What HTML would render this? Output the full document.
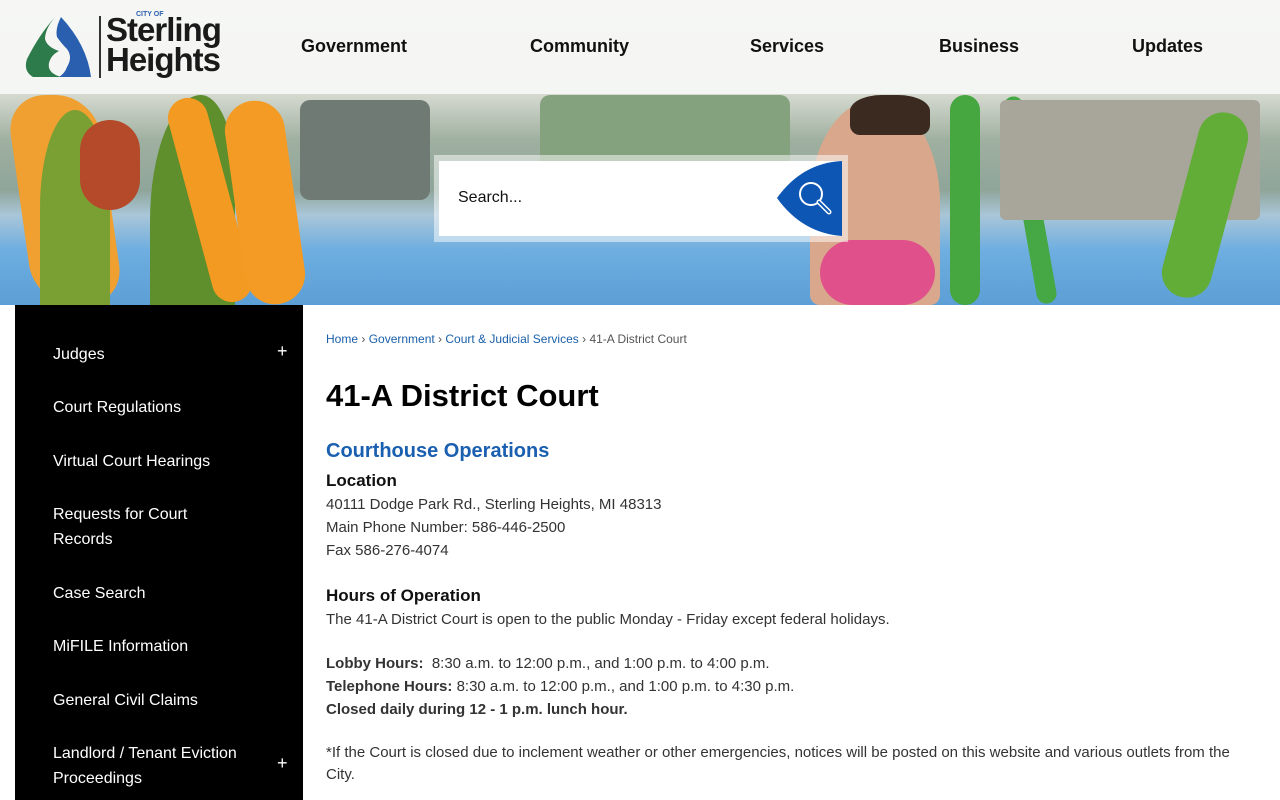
<!DOCTYPE html>
<html><head><meta charset="utf-8"><style>
*{margin:0;padding:0;box-sizing:border-box}
body{width:1280px;height:800px;overflow:hidden;font-family:"Liberation Sans",sans-serif;background:#fff;position:relative}
.hero{position:absolute;left:0;top:0;width:1280px;height:305px;overflow:hidden;
background:linear-gradient(180deg,#e9ece8 0px,#d5d9cf 95px,#9fb0a0 140px,#8fa59a 190px,#a9c6d8 215px,#6eaee0 250px,#5c9fd6 305px)}
.hdr{position:absolute;left:0;top:0;width:1280px;height:94px;background:rgba(246,247,245,.93)}
.nav{position:absolute;top:36px;font-size:18px;font-weight:bold;color:#111}
.blob{position:absolute;border-radius:40px}
.sb{position:absolute;left:15px;top:305px;width:288px;height:495px;background:#000}
.sb div{position:absolute;left:38px;color:#fff;font-size:16px;line-height:25px}
.sb span{position:absolute;left:262px;color:#fff;font-size:18px}
.main{position:absolute;left:303px;top:305px;width:962px;height:495px;background:#fff}
.c{position:absolute;left:326px;font-size:15px;color:#333;line-height:23px}
</style></head><body>
<div class="hero">
<div class="blob" style="left:20px;top:95px;width:90px;height:210px;background:#f0a030;transform:skewX(8deg)"></div>
<div class="blob" style="left:40px;top:110px;width:70px;height:195px;background:#7aa034;border-radius:50% 50% 0 0"></div>
<div class="blob" style="left:150px;top:95px;width:85px;height:210px;background:#5e8f2c;border-radius:60% 40% 0 0"></div>
<div class="blob" style="left:190px;top:95px;width:40px;height:210px;background:#f29a22;transform:rotate(-15deg)"></div>
<div class="blob" style="left:235px;top:100px;width:60px;height:205px;background:#f39b25;transform:rotate(-8deg)"></div>
<div class="blob" style="left:80px;top:120px;width:60px;height:90px;background:#b44a2a"></div>
<div class="blob" style="left:300px;top:100px;width:130px;height:100px;background:#6f7a74;border-radius:10px"></div>
<div class="blob" style="left:540px;top:95px;width:250px;height:80px;background:#84a27e;border-radius:10px"></div>
<div class="blob" style="left:810px;top:100px;width:130px;height:205px;background:#d9a88c;border-radius:50% 50% 10px 10px"></div>
<div class="blob" style="left:820px;top:240px;width:115px;height:65px;background:#e0508a"></div>
<div class="blob" style="left:850px;top:95px;width:80px;height:40px;background:#3a2a20;border-radius:40% 40% 10px 10px"></div>
<div class="blob" style="left:950px;top:95px;width:30px;height:210px;background:#46a640"></div>
<div class="blob" style="left:1020px;top:95px;width:20px;height:210px;background:#45a845;transform:rotate(-10deg)"></div>
<div class="blob" style="left:1000px;top:100px;width:260px;height:120px;background:#a8a69a;border-radius:6px"></div>
<div class="blob" style="left:1180px;top:110px;width:50px;height:190px;background:#62ad38;transform:rotate(15deg)"></div>
</div>
<div class="hdr"></div>
<svg style="position:absolute;left:25px;top:15px" width="68" height="64" viewBox="0 0 68 64">
<path d="M30 2 Q14 20 2 44 Q-2 56 8 62 L36 62 Q22 58 24 48 Q26 40 34 36 Q22 32 20 24 Q20 14 30 2Z" fill="#2d7a4a"/>
<path d="M36 2 Q30 14 32 22 Q36 28 42 34 Q48 42 42 52 Q40 58 34 62 L66 62 Q62 30 36 2Z" fill="#2a5fb0"/>
</svg>
<div style="position:absolute;left:99px;top:16px;width:2px;height:62px;background:#333"></div>
<div style="position:absolute;left:136px;top:11px;font-size:7px;color:#2a5fb0;font-weight:bold">CITY OF</div>
<div style="position:absolute;left:106px;top:15px;font-size:33px;font-weight:bold;color:#1a1a1a;line-height:30px;letter-spacing:-1px">Sterling<br>Heights</div>
<div class="nav" style="left:301px">Government</div>
<div class="nav" style="left:530px">Community</div>
<div class="nav" style="left:750px">Services</div>
<div class="nav" style="left:939px">Business</div>
<div class="nav" style="left:1132px">Updates</div>
<div style="position:absolute;left:434px;top:155px;width:414px;height:87px;background:rgba(255,255,255,.5)"></div>
<div style="position:absolute;left:439px;top:161px;width:403px;height:75px;background:#fff"></div>
<div style="position:absolute;left:458px;top:189px;font-size:16px;color:#111">Search...</div>
<svg style="position:absolute;left:777px;top:161px" width="65" height="75" viewBox="0 0 65 75">
<path d="M0 37 Q25 2 65 0 L65 75 Q25 72 0 37Z" fill="#0d56b3"/>
<circle cx="34" cy="33" r="11" fill="none" stroke="#fff" stroke-width="2"/>
<line x1="42" y1="41" x2="52" y2="51" stroke="#fff" stroke-width="5" stroke-linecap="round"/>
<line x1="42" y1="41" x2="52" y2="51" stroke="#0d56b3" stroke-width="2" stroke-linecap="round"/>
</svg>
<div class="sb">
<div style="top:37px">Judges</div><span style="top:36px">+</span>
<div style="top:90px">Court Regulations</div>
<div style="top:144px">Virtual Court Hearings</div>
<div style="top:197px">Requests for Court<br>Records</div>
<div style="top:276px">Case Search</div>
<div style="top:329px">MiFILE Information</div>
<div style="top:383px">General Civil Claims</div>
<div style="top:436px">Landlord / Tenant Eviction<br>Proceedings</div><span style="top:448px">+</span>
</div>
<div class="main"></div>
<div class="c" style="top:328px;font-size:12px;color:#555"><span style="color:#1a5fa8">Home</span> › <span style="color:#1a5fa8">Government</span> › <span style="color:#1a5fa8">Court &amp; Judicial Services</span> › 41-A District Court</div>
<div class="c" style="top:378px;font-size:31px;font-weight:bold;color:#000;line-height:36px">41-A District Court</div>
<div class="c" style="top:440px;font-size:20px;font-weight:bold;color:#1a5fb0">Courthouse Operations</div>
<div class="c" style="top:469px;font-size:17px;font-weight:bold;color:#111">Location</div>
<div class="c" style="top:493px">40111 Dodge Park Rd., Sterling Heights, MI 48313<br>Main Phone Number: 586-446-2500<br>Fax 586-276-4074</div>
<div class="c" style="top:584px;font-size:17px;font-weight:bold;color:#111">Hours of Operation</div>
<div class="c" style="top:608px">The 41-A District Court is open to the public Monday - Friday except federal holidays.</div>
<div class="c" style="top:652px"><b>Lobby Hours:</b>&nbsp; 8:30 a.m. to 12:00 p.m., and 1:00 p.m. to 4:00 p.m.<br><b>Telephone Hours:</b> 8:30 a.m. to 12:00 p.m., and 1:00 p.m. to 4:30 p.m.<br><b>Closed daily during 12 - 1 p.m. lunch hour.</b></div>
<div class="c" style="top:742px;width:920px;line-height:22px">*If the Court is closed due to inclement weather or other emergencies, notices will be posted on this website and various outlets from the City.</div>
</body></html>
